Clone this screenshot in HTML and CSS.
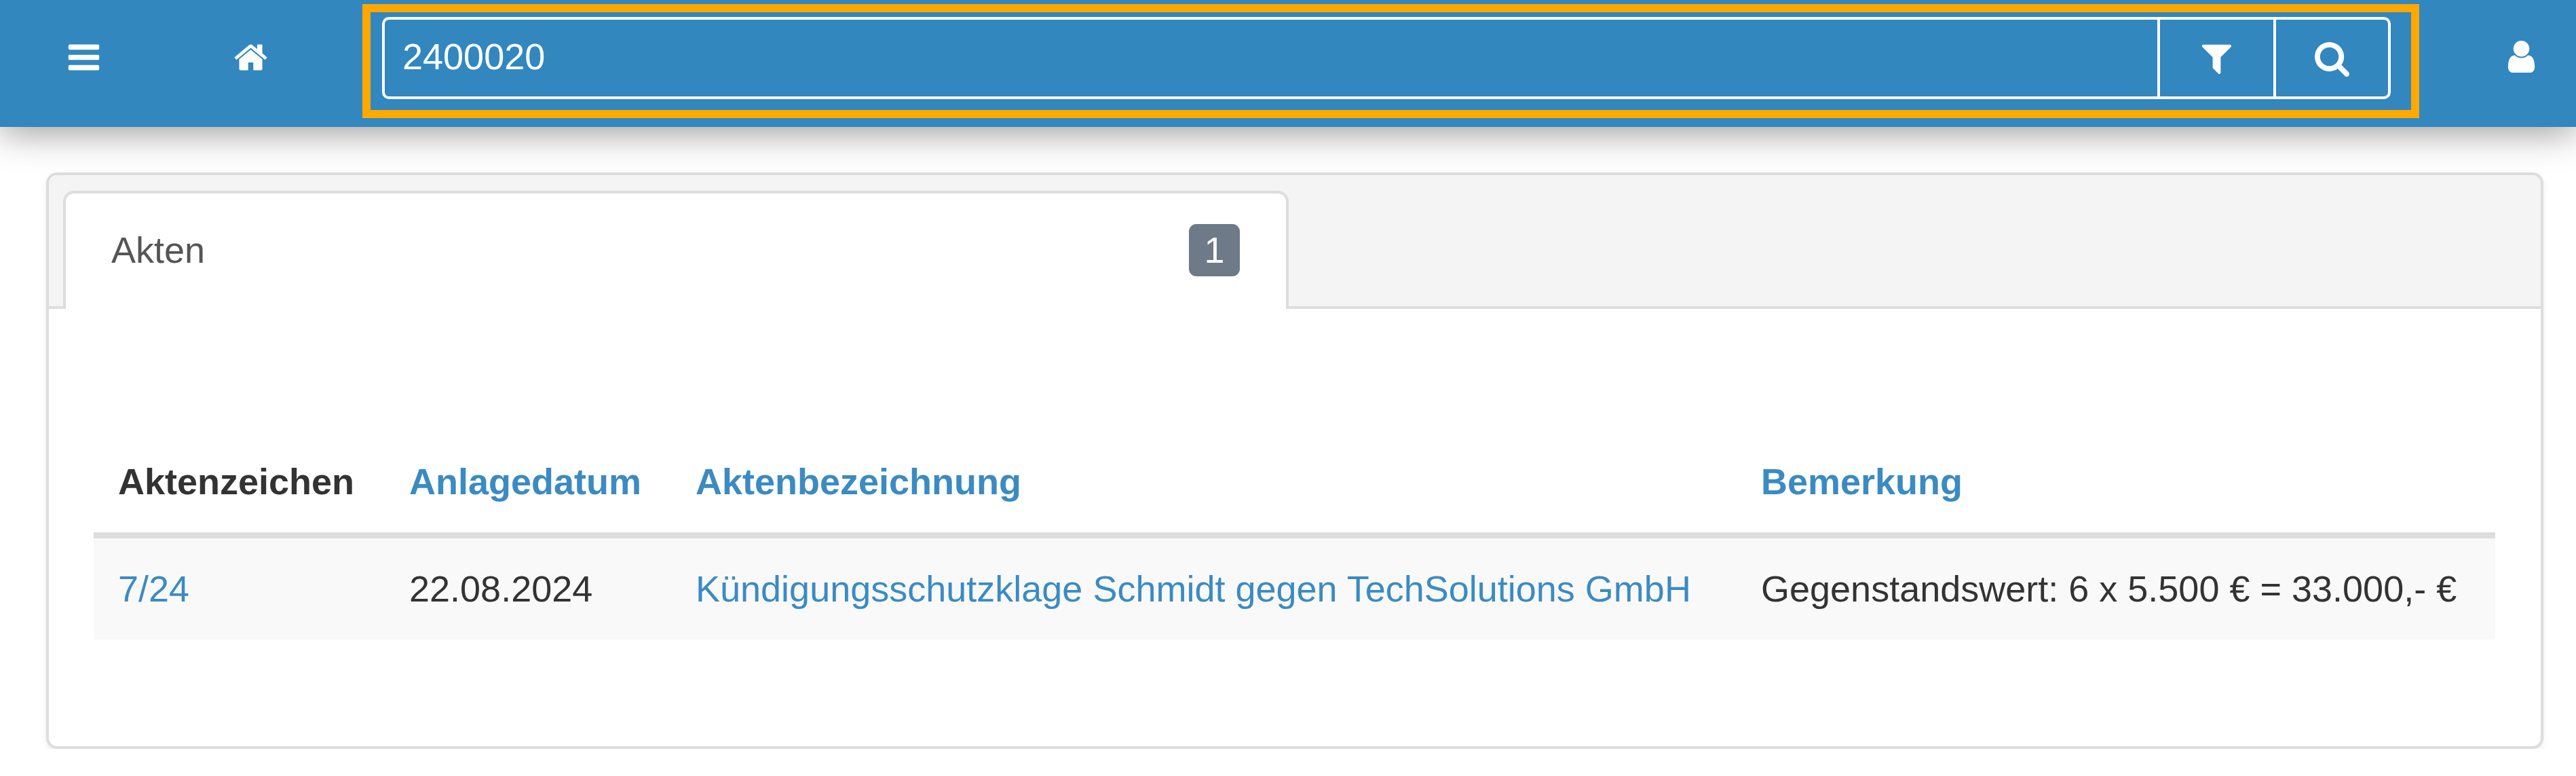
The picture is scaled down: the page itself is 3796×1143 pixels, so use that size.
FILE: index.html

```html
<!DOCTYPE html>
<html lang="de">
<head>
  <meta charset="UTF-8">
  <meta name="viewport" content="width=device-width, initial-scale=1.0">
  <title>Akten</title>
  <link rel="stylesheet" href="styles.css">
</head>
<body>
  <header class="topbar">
    <a class="nav-btn menu-btn" href="#">
      <svg class="icon" viewBox="0 0 1792 1792"><path d="M1664 1344v128q0 26-19 45t-45 19h-1408q-26 0-45-19t-19-45v-128q0-26 19-45t45-19h1408q26 0 45 19t19 45zm0-512v128q0 26-19 45t-45 19h-1408q-26 0-45-19t-19-45v-128q0-26 19-45t45-19h1408q26 0 45 19t19 45zm0-512v128q0 26-19 45t-45 19h-1408q-26 0-45-19t-19-45v-128q0-26 19-45t45-19h1408q26 0 45 19t19 45z"/></svg>
    </a>
    <a class="nav-btn home-btn" href="#">
      <svg class="icon" viewBox="0 0 1792 1792"><path d="M1472 992v480q0 26-19 45t-45 19h-384v-384h-256v384h-384q-26 0-45-19t-19-45v-480q0-1 .5-3t.5-3l575-474 575 474q1 2 1 6zm223-69l-62 74q-8 9-21 11h-3q-13 0-21-7l-692-577-692 577q-12 8-24 7-13-2-21-11l-62-74q-8-10-7-23.5t11-21.5l719-599q32-26 76-26t76 26l244 204v-195q0-14 9-23t23-9h192q14 0 23 9t9 23v408l219 182q10 8 11 21.5t-7 23.5z"/></svg>
    </a>
    <form class="search-mark">
      <div class="search-box">
        <input class="search-input" type="text" value="2400020">
        <button class="search-btn filter-btn" type="button">
          <svg class="icon icon-lg" viewBox="0 0 1792 1792"><path d="M1595 295q17 41-14 70l-493 493v742q0 42-39 59-13 5-25 5-27 0-45-19l-256-256q-19-19-19-45v-486l-493-493q-31-29-14-70 17-39 59-39h1280q42 0 59 39z"/></svg>
        </button>
        <button class="search-btn go-btn" type="button">
          <svg class="icon icon-lg" viewBox="0 0 1792 1792"><path d="M1216 832q0-185-131.5-316.5t-316.5-131.5-316.5 131.5-131.5 316.5 131.5 316.5 316.5 131.5 316.5-131.5 131.5-316.5zm512 832q0 52-38 90t-90 38q-54 0-90-38l-343-342q-179 124-399 124-143 0-273.5-55.5t-225-150-150-225-55.5-273.5 55.5-273.5 150-225 225-150 273.5-55.5 273.5 55.5 225 150 150 225 55.5 273.5q0 220-124 399l343 343q37 37 37 90z"/></svg>
        </button>
      </div>
    </form>
    <a class="nav-btn user-btn" href="#">
      <svg class="icon icon-lg" viewBox="0 0 1792 1792"><path d="M1536 1399q0 109-62.5 187t-150.5 78h-854q-88 0-150.5-78t-62.5-187q0-85 8.5-160.5t31.5-152 58.5-131 94-89 134.5-34.5q131 128 313 128t313-128q76 0 134.5 34.5t94 89 58.5 131 31.5 152 8.5 160.5zm-256-887q0 159-112.5 271.5t-271.5 112.5-271.5-112.5-112.5-271.5 112.5-271.5 271.5-112.5 271.5 112.5 112.5 271.5z"/></svg>
    </a>
  </header>

  <main class="content">
    <section class="card">
      <div class="tabs">
        <a class="tab" href="#">
          <span>Akten</span>
          <span class="badge">1</span>
        </a>
      </div>
      <div class="tab-pane">
        <table class="results">
          <colgroup>
            <col class="col-az">
            <col class="col-date">
            <col class="col-name">
            <col class="col-note">
          </colgroup>
          <thead>
            <tr>
              <th>Aktenzeichen</th>
              <th><a href="#">Anlagedatum</a></th>
              <th><a href="#">Aktenbezeichnung</a></th>
              <th><a href="#">Bemerkung</a></th>
            </tr>
          </thead>
          <tbody>
            <tr>
              <td><a href="#">7/24</a></td>
              <td>22.08.2024</td>
              <td><a href="#">Kündigungsschutzklage Schmidt gegen TechSolutions GmbH</a></td>
              <td>Gegenstandswert: 6 x 5.500 € = 33.000,- €</td>
            </tr>
          </tbody>
        </table>
      </div>
    </section>
  </main>
</body>
</html>
```

FILE: styles.css

```css
body {
  margin: 0;
  background: #fff;
  color: #333;
  font-family: "Liberation Sans", Arial, sans-serif;
  font-size: 54px;
  line-height: 77px;
}
a {
  color: #3b8bc2;
  text-decoration: none;
}
.topbar {
  display: flex;
  align-items: flex-start;
  height: 187px;
  background: #3287bf;
  box-shadow: 0 8px 50px rgba(0,0,0,0.4);
}
.icon {
  display: block;
  width: 53px;
  height: 53px;
  fill: #fff;
}
.icon-lg {
  width: 55px;
  height: 55px;
}
.nav-btn {
  display: flex;
  justify-content: center;
  padding-top: 58px;
}
.menu-btn {
  width: 247px;
}
.home-btn {
  width: 245px;
}
.user-btn {
  width: 231px;
  justify-content: flex-start;
  box-sizing: border-box;
  padding-left: 123px;
  padding-top: 56px;
}
.search-mark {
  flex: 1;
  margin: 6px 0 0 42px;
  height: 168px;
  box-sizing: border-box;
  border: 12px solid #ffa800;
  padding: 7px 30px 16px 17px;
}
.search-box {
  display: flex;
  height: 121px;
  box-sizing: border-box;
  border: 4px solid #fff;
  border-radius: 10px;
}
.search-input {
  flex: 1;
  min-width: 0;
  padding: 0 26px 5px;
  border: none;
  outline: none;
  background: transparent;
  color: #fff;
  font-family: inherit;
  font-size: 54px;
}
.search-btn {
  display: flex;
  align-items: center;
  justify-content: center;
  box-sizing: border-box;
  padding: 0;
  border: none;
  border-left: 4px solid #fff;
  background: transparent;
}
.filter-btn {
  width: 171px;
}
.go-btn {
  width: 169px;
}
.content {
  padding: 67px 48px 0 68px;
}
.card {
  box-sizing: border-box;
  height: 849px;
  border: 4px solid #ddd;
  border-radius: 16px;
  background: #fff;
  box-shadow: 0 3px 8px rgba(0,0,0,0.08);
}
.tabs {
  display: flex;
  height: 197px;
  box-sizing: border-box;
  padding: 23px 0 0 21px;
  border-bottom: 4px solid #ddd;
  border-radius: 12px 12px 0 0;
  background: #f4f4f4;
}
.tab {
  display: flex;
  align-items: center;
  justify-content: space-between;
  width: 1806px;
  height: 174px;
  box-sizing: border-box;
  padding: 0 68px 4px 67px;
  border: 4px solid #ddd;
  border-bottom: none;
  border-radius: 16px 16px 0 0;
  background: #fff;
  color: #555;
}
.badge {
  width: 75px;
  height: 77px;
  border-radius: 11px;
  background: #6e7a88;
  color: #fff;
  text-align: center;
}
.tab-pane {
  padding: 180px 67px 0 66px;
}
.results {
  width: 100%;
  table-layout: fixed;
  border-collapse: separate;
  border-spacing: 0;
}
.col-az {
  width: 429px;
}
.col-date {
  width: 422px;
}
.col-name {
  width: 1570px;
}
.results th,
.results td {
  padding: 36px;
  text-align: left;
  white-space: nowrap;
}
.results th {
  border-bottom: 9px solid #ddd;
  font-weight: bold;
}
.results td {
  background: #f9f9f9;
}
```
